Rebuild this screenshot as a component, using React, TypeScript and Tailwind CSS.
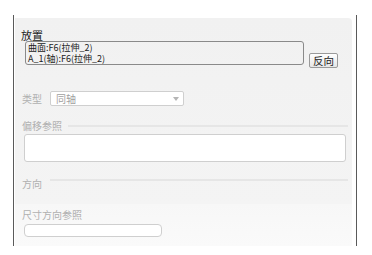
import React from "react";

const font = { fontFamily: '"Noto Sans CJK SC", "Noto Sans", sans-serif' };

export default function App() {
  return (
    <div className="w-[372px] h-[255px] bg-white pt-[15px] pl-[13px]" style={font}>
      <div className="w-[344px] h-[231px] border-l-[1.5px] border-r-[1.5px] border-[#5a5a5a] pt-[3px] pl-[1px] flex flex-col">
        <div className="w-[337px] flex-1 rounded-tr-[4px] flex flex-col">
          {/* upper section */}
          <div className="h-[186px] shrink-0 bg-gradient-to-b from-[#f1f1f1] to-[#f4f4f4] rounded-tr-[4px] pl-[6px] flex flex-col">
            <div className="mt-[11px] h-[12px] leading-[12px] text-[11px] text-[#222] whitespace-nowrap">放置</div>
            <div className="flex items-start">
              <div className="ml-[4px] w-[279px] h-[24px] shrink-0 border border-[#8a8a8a] rounded-[3px] pl-[2px] text-[9px] text-[#222] overflow-hidden">
                <div className="h-[11px] leading-[11px] whitespace-nowrap">曲面:F6(拉伸_2)</div>
                <div className="h-[11px] leading-[11px] whitespace-nowrap">A_1(轴):F6(拉伸_2)</div>
              </div>
              <div className="ml-[5px] mt-[12px] w-[29px] h-[15px] shrink-0 border border-[#9a9a9a] rounded-[2px] bg-gradient-to-b from-white to-[#e6e6e6] text-[10.5px] leading-[13px] text-[#222] flex items-center justify-center whitespace-nowrap">
                反向
              </div>
            </div>
            <div className="mt-[23px] flex items-center">
              <span className="ml-[1px] text-[10px] leading-[12px] text-[#b0b0b0] whitespace-nowrap">类型</span>
              <div className="ml-[8px] w-[134px] h-[15px] shrink-0 border border-[#cfcfcf] rounded-[2px] bg-white flex items-center justify-between pl-[5px] pr-[4px]">
                <span className="text-[10px] leading-[12px] text-[#a0a0a0] whitespace-nowrap">同轴</span>
                <svg width="6" height="4" viewBox="0 0 6 4"><path d="M0 0 H6 L3 4 Z" fill="#b5b5b5" /></svg>
              </div>
            </div>
            <div className="mt-[14px] flex items-center">
              <span className="ml-[1px] text-[10px] leading-[12px] text-[#b0b0b0] whitespace-nowrap shrink-0">偏移参照</span>
              <div className="ml-[6px] w-[280px] h-[2px] shrink-0 bg-[#e6e6e6]" />
            </div>
            <div className="mt-[2px] ml-[3px] w-[322px] h-[28px] shrink-0 border border-[#cfcfcf] rounded-[3px] bg-white" />
            <div className="mt-[16px] flex items-start">
              <span className="ml-[1px] text-[10px] leading-[12px] text-[#b0b0b0] whitespace-nowrap shrink-0">方向</span>
              <div className="ml-[8px] mt-[1px] w-[298px] h-[2px] shrink-0 bg-[#e6e6e6]" />
            </div>
          </div>
          {/* lower section */}
          <div className="flex-1 bg-gradient-to-b from-[#f7f7f7] to-[#fafafa] pl-[6px] flex flex-col">
            <div className="mt-[5px] ml-[1px] text-[10px] leading-[12px] text-[#b0b0b0] whitespace-nowrap">尺寸方向参照</div>
            <div className="mt-[3px] ml-[3px] w-[138px] h-[13px] shrink-0 border border-[#cfcfcf] rounded-[4px] bg-white" />
          </div>
        </div>
      </div>
    </div>
  );
}
